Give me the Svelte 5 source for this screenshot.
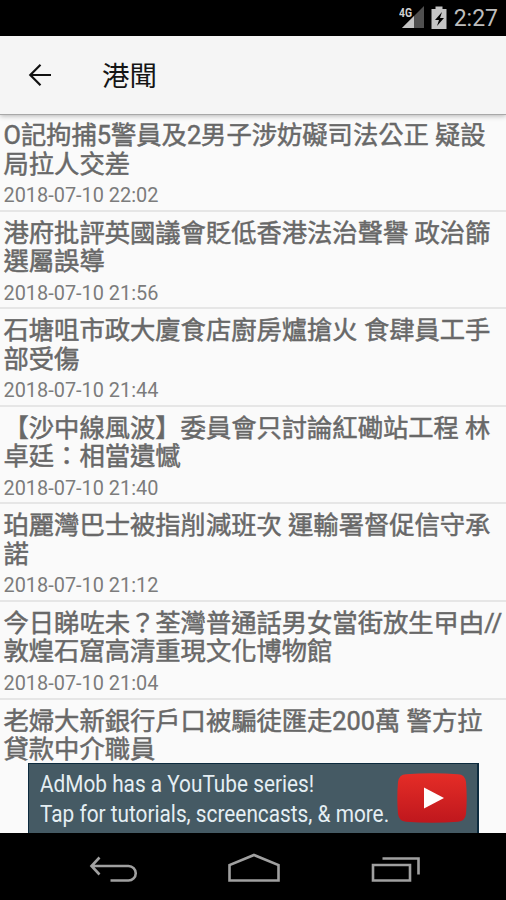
<script>
    const title = '港聞';

    const articles = [
        { lines: ['O記拘捕5警員及2男子涉妨礙司法公正 疑設', '局拉人交差'], date: '2018-07-10 22:02' },
        { lines: ['港府批評英國議會貶低香港法治聲譽 政治篩', '選屬誤導'], date: '2018-07-10 21:56' },
        { lines: ['石塘咀市政大廈食店廚房爐搶火 食肆員工手', '部受傷'], date: '2018-07-10 21:44' },
        { lines: ['【沙中線風波】委員會只討論紅磡站工程 林', '卓廷：相當遺憾'], date: '2018-07-10 21:40' },
        { lines: ['珀麗灣巴士被指削減班次 運輸署督促信守承', '諾'], date: '2018-07-10 21:12' },
        { lines: ['今日睇咗未？荃灣普通話男女當街放生曱甴//', '敦煌石窟高清重現文化博物館'], date: '2018-07-10 21:04' },
        { lines: ['老婦大新銀行戶口被騙徒匯走200萬 警方拉', '貸款中介職員'], date: '' }
    ];
</script>

<style>
    :global(body) {
        background: #000;
    }

    .screen {
        position: relative;
        display: flex;
        flex-direction: column;
        width: 506px;
        height: 900px;
        overflow: hidden;
        background: #fafafa;
        font-family: Roboto, "Noto Sans CJK TC", sans-serif;
    }

    .status {
        display: flex;
        flex: none;
        justify-content: flex-end;
        align-items: center;
        height: 36px;
        padding-right: 8px;
        box-sizing: border-box;
        background: #000;
        color: #bdbdbd;
    }
    .status svg {
        display: block;
        margin-right: 6px;
    }
    .clock {
        font-size: 23px;
        line-height: 36px;
        padding-top: 2px;
    }

    .toolbar {
        position: relative;
        z-index: 1;
        display: flex;
        flex: none;
        align-items: center;
        height: 79px;
        padding-left: 28px;
        box-sizing: border-box;
        background: #f5f5f5;
        border-bottom: 1px solid #a8a8a8;
        box-shadow: 0 1px 5px rgba(0, 0, 0, 0.28);
    }
    .toolbar h1 {
        margin: 3px 0 0 50px;
        font-size: 27.5px;
        font-weight: 400;
        line-height: 40px;
        color: #151515;
    }

    .list {
        flex: 1;
        min-height: 0;
        margin: -1px 0 0;
        padding: 0;
        overflow: hidden;
        list-style: none;
    }
    .item {
        height: 97.6px;
        padding: 8px 0 0 3.5px;
        box-sizing: border-box;
        border-bottom: 2px solid #e6e6e6;
        white-space: nowrap;
    }
    .item:last-child {
        border-bottom: 0;
    }
    .headline {
        height: 57px;
        font-size: 25.3px;
        line-height: 28.5px;
        color: #686868;
        -webkit-text-stroke: 0.5px #686868;
    }
    .headline div {
        height: 28.5px;
    }
    .date {
        margin-top: 5px;
        font-size: 19.9px;
        line-height: 24px;
        color: #7c7c7c;
    }

    .ad {
        position: absolute;
        left: 28px;
        bottom: 67px;
        z-index: 2;
        display: flex;
        justify-content: space-between;
        width: 451px;
        height: 70px;
        padding: 6px 10px 0 11px;
        box-sizing: border-box;
        background: #455a64;
        border: solid #0d2b3e;
        border-width: 1px 2px 0 1px;
    }
    .copy {
        width: 350px;
        font-size: 23px;
        line-height: 29.5px;
        color: #e4eef3;
        white-space: nowrap;
    }
    .copy div {
        width: max-content;
        transform: scaleX(0.904);
        transform-origin: left;
    }
    .ad svg {
        flex: none;
        margin-top: 3px;
    }

    .nav {
        display: flex;
        flex: none;
        justify-content: center;
        height: 67px;
        background: #000;
    }
</style>

<div class="screen">
    <div class="status">
        <svg width="49" height="26" viewBox="0 0 49 26">
            <path d="M25 1v22H3z" fill="#505050" />
            <path d="M15 11v12H3z" fill="#c4c4c4" />
            <text x="0" y="12" font-size="12" font-weight="700" fill="#d0d0d0" stroke="#000" stroke-width="2" paint-order="stroke" textLength="13" lengthAdjust="spacingAndGlyphs">4G</text>
            <path d="M32.500 4h4V1.500h7V4h4v20h-15z" fill="#c4c4c4" />
            <path d="M43 7l-7 8h4l-2 6 7-8h-4z" fill="#000" />
        </svg>
        <div class="clock">2:27</div>
    </div>

    <div class="toolbar">
        <svg width="24" height="24" viewBox="0 0 24 24" fill="none" stroke="#111" stroke-width="2.2">
            <path d="M23 12H2.5M12.5 1.8L2.3 12l10.2 10.2" />
        </svg>
        <h1>{title}</h1>
    </div>

    <ul class="list">
        {#each articles as article}
            <li class="item">
                <div class="headline">
                    {#each article.lines as line}
                        <div>{line}</div>
                    {/each}
                </div>
                <div class="date">{article.date}</div>
            </li>
        {/each}
    </ul>

    <div class="ad">
        <div class="copy">
            <div>AdMob has a YouTube series!</div>
            <div>Tap for tutorials, screencasts, &amp; more.</div>
        </div>
        <svg width="70" height="50" viewBox="0 0 70 50">
            <defs>
                <linearGradient id="play" x1="0" y1="0" x2="0" y2="1">
                    <stop offset="0" stop-color="#e52d27" />
                    <stop offset="1" stop-color="#bf171d" />
                </linearGradient>
            </defs>
            <path d="M9 1.2Q35-.8 61 1.2 68 1.5 69 9q1.4 16 0 32-1 7.2-8 7.8-26 2-52 0Q2 48.2 1 41-.4 25 1 9 2 1.5 9 1.2z" fill="url(#play)" />
            <path d="M27 14.5v21L47 25z" fill="#fff" />
        </svg>
    </div>

    <div class="nav">
        <svg width="506" height="67" viewBox="0 0 506 67" fill="none" stroke="#a0a0a0" stroke-width="2.6">
            <path d="M99.5 24.5l-8 8.5 8 8.5M92 33h36.5a7.2 7.2 0 0 1 0 14.5H110.5" />
            <path d="M229.5 47.500V32L254 22l24.500 10v15.500z" />
            <path d="M373 32h37v15.500h-37zM382.500 25.500h36v16" />
        </svg>
    </div>
</div>
